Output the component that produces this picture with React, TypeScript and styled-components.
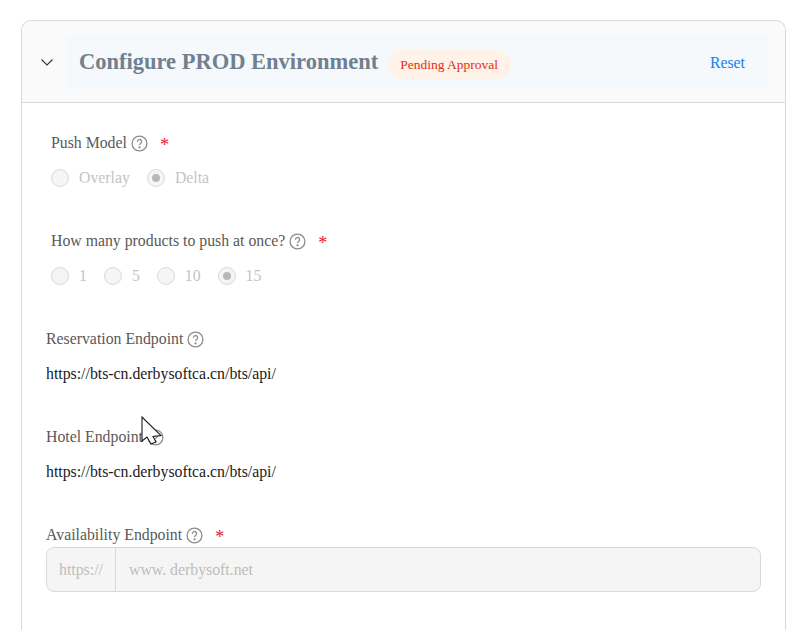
import styled, { createGlobalStyle } from 'styled-components';

const GlobalStyle = createGlobalStyle`
  html, body {
    margin: 0;
    padding: 0;
    height: 630px;
    overflow: hidden;
    background: #ffffff;
    font-family: "Liberation Serif", "Times New Roman", serif;
  }
`

const Page = styled.div`
  position: relative;
  padding: 20px 24px 0 21px;
  height: 610px;
  overflow: hidden;
`

const Card = styled.section`
  border: 1px solid #d9d9d9;
  border-bottom: none;
  border-radius: 10px 10px 0 0;
  height: 640px;
`

const Header = styled.div`
  display: flex;
  align-items: center;
  height: 81px;
  background: #fafafa;
  border-bottom: 1px solid #d9d9d9;
  border-radius: 10px 10px 0 0;
  padding: 0 17px 0 18px;
`

const Toggle = styled.div`
  display: flex;
  width: 26px;
  flex-shrink: 0;
`

const TitleBand = styled.div`
  flex: 1;
  display: flex;
  align-items: center;
  height: 53px;
  background: #f5f9fc;
  padding: 0 23px 0 13px;
  margin-bottom: 1px;
`

const Title = styled.h2`
  margin: 2px 9px 0 0;
  font-size: 22.5px;
  font-weight: 700;
  color: #708090;
`

const Pill = styled.span`
  display: inline-block;
  height: 29px;
  line-height: 29px;
  padding: 0 13px;
  border-radius: 15px;
  background: #fff2e8;
  color: #e02f14;
  font-size: 13.5px;
  margin-top: 6px;
`

const Reset = styled.a`
  margin-left: auto;
  margin-top: 3px;
  color: #1380f0;
  font-size: 15.8px;
`

const Form = styled.div`
  display: flex;
  flex-direction: column;
  padding: 30px 24px 0 24px;
`

const Field = styled.div<{ $indent?: boolean; $height: number }>`
  height: ${(p) => p.$height}px;
  padding-left: ${(p) => (p.$indent ? 5 : 0)}px;
`

const Label = styled.div`
  display: flex;
  align-items: center;
  height: 20px;
  font-size: 15.8px;
  color: #595959;
`

const Help = styled.svg`
  width: 17px;
  height: 17px;
  margin-left: 4px;
  flex-shrink: 0;
`

const Required = styled.span`
  color: #e0202a;
  font-size: 18px;
  margin-left: 12px;
  padding-top: 4px;
  line-height: 20px;
`

const RadioRow = styled.div`
  display: flex;
  align-items: center;
  gap: 17px;
  margin-top: 15px;
  height: 20px;
`

const RadioItem = styled.label`
  display: flex;
  align-items: center;
  gap: 10px;
  font-size: 15.8px;
  color: #c4c4c4;
`

const RadioDot = styled.span<{ $checked?: boolean }>`
  display: flex;
  align-items: center;
  justify-content: center;
  width: 16px;
  height: 16px;
  border: 1px solid #d9d9d9;
  border-radius: 50%;
  background: #f5f5f5;

  &::after {
    content: '';
    display: ${(p) => (p.$checked ? 'block' : 'none')};
    width: 8px;
    height: 8px;
    border-radius: 50%;
    background: #b8b8b8;
  }
`

const Value = styled.div`
  margin-top: 15px;
  font-size: 15.8px;
  line-height: 20px;
  color: #1a1a1a;
`

const InputGroup = styled.div`
  display: flex;
  height: 43px;
  margin-top: 2px;
  width: 713px;
  border: 1px solid #d9d9d9;
  border-radius: 8px;
  background: #f5f5f5;
  font-size: 15.8px;
  color: #bdbdbd;
`

const Addon = styled.div`
  display: flex;
  align-items: center;
  justify-content: center;
  width: 68px;
  border-right: 1px solid #d9d9d9;
`

const InputText = styled.div`
  display: flex;
  align-items: center;
  padding-left: 13px;
`

const Cursor = styled.svg`
  position: absolute;
  left: 141px;
  top: 416px;
  width: 24px;
  height: 30px;
`

const HelpIcon = () => (
  <Help viewBox="0 0 16 16" fill="none" stroke="#8c8c8c" strokeWidth="1.2">
    <circle cx="8" cy="8" r="7" />
    <path d="M6 6.3a2 2 0 1 1 3 1.7c-.6.4-1 .7-1 1.5" />
    <circle cx="8" cy="11.6" r=".45" fill="#8c8c8c" />
  </Help>
)

const Radio = ({ label, checked }: { label: string; checked?: boolean }) => (
  <RadioItem>
    <RadioDot $checked={checked} />
    {label}
  </RadioItem>
)

const App = () => {
  return (
    <>
      <GlobalStyle />
      <Page>
        <Card>
          <Header>
            <Toggle>
              <svg width="14" height="14" viewBox="0 0 14 14" fill="none" stroke="#333333" strokeWidth="1.1">
                <path d="M1.5 4.5 7 10l5.5-5.5" />
              </svg>
            </Toggle>
            <TitleBand>
              <Title>Configure PROD Environment</Title>
              <Pill>Pending Approval</Pill>
              <Reset>Reset</Reset>
            </TitleBand>
          </Header>
          <Form>
            <Field $indent $height={98}>
              <Label>
                Push Model
                <HelpIcon />
                <Required>*</Required>
              </Label>
              <RadioRow>
                <Radio label="Overlay" />
                <Radio label="Delta" checked />
              </RadioRow>
            </Field>
            <Field $indent $height={98}>
              <Label>
                How many products to push at once?
                <HelpIcon />
                <Required>*</Required>
              </Label>
              <RadioRow>
                <Radio label="1" />
                <Radio label="5" />
                <Radio label="10" />
                <Radio label="15" checked />
              </RadioRow>
            </Field>
            <Field $height={98}>
              <Label>
                Reservation Endpoint
                <HelpIcon />
              </Label>
              <Value>https://bts-cn.derbysoftca.cn/bts/api/</Value>
            </Field>
            <Field $height={98}>
              <Label>
                Hotel Endpoint
                <HelpIcon />
              </Label>
              <Value>https://bts-cn.derbysoftca.cn/bts/api/</Value>
            </Field>
            <Field $height={70}>
              <Label>
                Availability Endpoint
                <HelpIcon />
                <Required>*</Required>
              </Label>
              <InputGroup>
                <Addon>https://</Addon>
                <InputText>www. derbysoft.net</InputText>
              </InputGroup>
            </Field>
          </Form>
        </Card>
        <Cursor viewBox="0 0 24 30">
          <path
            d="M1 1 L1 25 L6 21 L10 28 L15 26 L12 20.5 L20 19.5 Z"
            fill="#ffffff"
            stroke="#1a1a1a"
            strokeWidth="1.1"
            strokeLinejoin="miter"
          />
        </Cursor>
      </Page>
    </>
  );
};

export default App;
